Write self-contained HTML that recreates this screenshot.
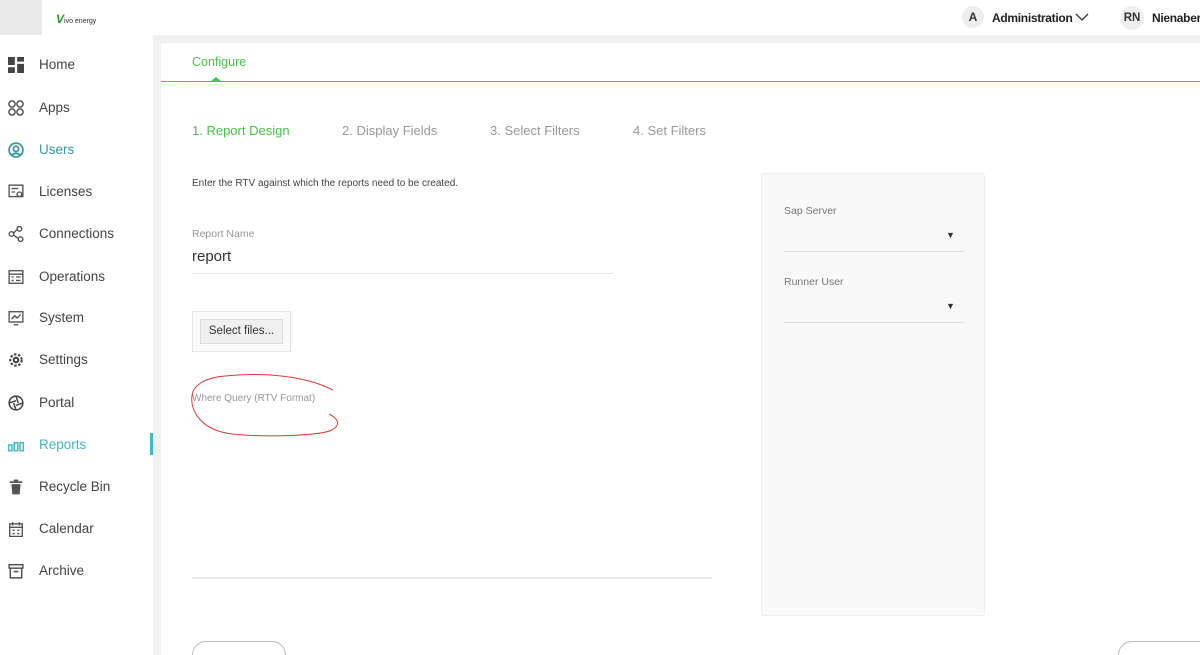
<!DOCTYPE html><html style="overflow:hidden;height:655px"><head><style>
*{margin:0;padding:0;box-sizing:border-box}
body{width:1200px;height:655px;overflow:hidden;background:#f1f1f1;font-family:"Liberation Sans",sans-serif;position:relative;color:#333}
.a{position:absolute;white-space:nowrap}
.nav{font-size:13.5px;color:#444;left:39px}
.ic{left:8px;width:16px;height:16px}
</style></head><body>
<div class="a" style="left:0;top:0;width:1200px;height:35px;background:#fff"></div>
<div class="a" style="left:0;top:0;width:42px;height:35px;background:#e9e9e9"></div>
<div class="a" style="left:56px;top:12px;font-size:7px;color:#333"><span style="color:#2a9a2a;font-size:12px;font-style:italic;font-weight:bold">V</span>ivo energy</div>
<div class="a" style="left:962px;top:6px;width:22px;height:22px;border-radius:50%;background:#eee;font-size:12px;font-weight:bold;text-align:center;line-height:22px">A</div>
<div class="a" style="left:992px;top:11px;font-size:12px;font-weight:bold;color:#222;letter-spacing:-0.3px">Administration</div>
<svg class="a" style="left:1075px;top:13px" width="14" height="9"><path d="M1 1l6 6 6-6" fill="none" stroke="#333" stroke-width="1.3"/></svg>
<div class="a" style="left:1120px;top:6px;width:24px;height:24px;border-radius:50%;background:#eee;font-size:11.5px;font-weight:bold;text-align:center;line-height:24px">RN</div>
<div class="a" style="left:1152px;top:11px;font-size:12px;font-weight:bold;color:#222;letter-spacing:-0.3px">Nienaber,</div>
<div class="a" style="left:0;top:35px;width:153px;height:620px;background:#fff"></div>
<div class="a" style="left:150px;top:433px;width:3px;height:22px;background:#3fb8c4"></div>
<svg class="a ic" style="top:57px" viewBox="0 0 14 14"><rect x="0" y="0" width="6" height="7" fill="#444"/><rect x="8" y="0" width="6" height="4" fill="#444"/><rect x="0" y="9" width="6" height="5" fill="#444"/><rect x="8" y="6" width="6" height="8" fill="#444"/></svg>
<div class="a nav" style="top:57px">Home</div>
<svg class="a ic" style="top:100px" viewBox="0 0 14 14"><g fill="none" stroke="#555" stroke-width="1.3"><circle cx="3.5" cy="3.5" r="2.7"/><circle cx="10.5" cy="3.5" r="2.7"/><circle cx="3.5" cy="10.5" r="2.7"/><circle cx="10.5" cy="10.5" r="2.7"/></g></svg>
<div class="a nav" style="top:100px">Apps</div>
<svg class="a ic" style="top:142px" viewBox="0 0 14 14"><g fill="none" stroke="#3a9a9a" stroke-width="1.6"><circle cx="7" cy="7" r="6"/><circle cx="7" cy="6" r="2.3"/><path d="M3.5 11.5c1-2 6-2 7 0"/></g></svg>
<div class="a nav" style="top:142px;color:#3a9a9a">Users</div>
<svg class="a ic" style="top:184px" viewBox="0 0 14 14"><g fill="none" stroke="#555" stroke-width="1.2"><rect x="1" y="1" width="12" height="10"/><path d="M3 4h6M3 7h3"/><circle cx="10" cy="9" r="2"/></g></svg>
<div class="a nav" style="top:184px">Licenses</div>
<svg class="a ic" style="top:226px" viewBox="0 0 14 14"><g fill="none" stroke="#555" stroke-width="1.2"><circle cx="3" cy="7" r="2"/><circle cx="10" cy="2.5" r="2"/><circle cx="11" cy="11.5" r="2"/><path d="M5 6l3-3M5 8l4 3"/></g></svg>
<div class="a nav" style="top:226px">Connections</div>
<svg class="a ic" style="top:269px" viewBox="0 0 14 14"><g fill="none" stroke="#555" stroke-width="1.2"><rect x="1" y="1.5" width="12" height="11"/><path d="M1 4.5h12M3 7h2M7 7h4M3 10h2M7 10h4"/></g></svg>
<div class="a nav" style="top:269px">Operations</div>
<svg class="a ic" style="top:310px" viewBox="0 0 14 14"><g fill="none" stroke="#555" stroke-width="1.2"><rect x="1" y="1.5" width="12" height="9"/><path d="M3 8l3-3 2 2 3-3M5 13h4"/></g></svg>
<div class="a nav" style="top:310px">System</div>
<svg class="a ic" style="top:352px" viewBox="0 0 14 14"><g fill="none" stroke="#444" stroke-width="1.8"><circle cx="7" cy="7" r="2"/><circle cx="7" cy="7" r="5" stroke-dasharray="2.2 1.4"/></g></svg>
<div class="a nav" style="top:352px">Settings</div>
<svg class="a ic" style="top:395px" viewBox="0 0 14 14"><g fill="none" stroke="#444" stroke-width="1.3"><circle cx="7" cy="7" r="6"/><path d="M7 1l2 6M13 7l-6 2M7 13l-2-6M1 7l6-2"/></g></svg>
<div class="a nav" style="top:395px">Portal</div>
<svg class="a ic" style="top:437px" viewBox="0 0 14 14"><g fill="none" stroke="#3fb8c4" stroke-width="1.3"><rect x="0.5" y="7" width="3" height="5"/><rect x="5.5" y="5" width="3" height="7"/><rect x="10.5" y="5" width="3" height="7"/></g></svg>
<div class="a nav" style="top:437px;color:#3fb8c4">Reports</div>
<svg class="a ic" style="top:479px" viewBox="0 0 14 14"><g fill="#555"><rect x="1.5" y="2" width="11" height="1.5"/><rect x="5" y="0.5" width="4" height="1.5"/><path d="M3 4.5h8l-.8 9H3.8z"/></g></svg>
<div class="a nav" style="top:479px">Recycle Bin</div>
<svg class="a ic" style="top:521px" viewBox="0 0 14 14"><g fill="none" stroke="#555" stroke-width="1.2"><rect x="1.5" y="2.5" width="11" height="11"/><path d="M1.5 5.5h11M4 1v3M10 1v3M4 8h2M8 8h2M4 11h2M8 11h2"/></g></svg>
<div class="a nav" style="top:521px">Calendar</div>
<svg class="a ic" style="top:563px" viewBox="0 0 14 14"><g fill="none" stroke="#555" stroke-width="1.3"><rect x="1" y="1.5" width="12" height="3"/><path d="M2 4.5v8.5h10V4.5M5 7.5h4"/></g></svg>
<div class="a nav" style="top:563px">Archive</div>
<div class="a" style="left:161px;top:43px;width:1039px;height:612px;background:#fff;overflow:hidden">
<div class="a" style="left:31px;top:12px;font-size:12.5px;color:#4ac24a">Configure</div>
<div class="a" style="left:0;top:38px;width:1039px;height:1px;background:#44c944"></div>
<div class="a" style="left:50px;top:34px;width:0;height:0;border-left:5px solid transparent;border-right:5px solid transparent;border-bottom:4px solid #44c944"></div>
<div class="a" style="left:31px;top:80px;font-size:13px;color:#4ac24a">1. Report Design</div>
<div class="a" style="left:181px;top:80px;font-size:13px;color:#999">2. Display Fields</div>
<div class="a" style="left:329px;top:80px;font-size:13px;color:#999">3. Select Filters</div>
<div class="a" style="left:472px;top:80px;font-size:13px;color:#999">4. Set Filters</div>
<div class="a" style="left:31px;top:135px;font-size:10px;color:#444">Enter the RTV against which the reports need to be created.</div>
<div class="a" style="left:31px;top:185px;font-size:10.5px;color:#999">Report Name</div>
<div class="a" style="left:31px;top:205px;font-size:15px;color:#333">report</div>
<div class="a" style="left:31px;top:230px;width:421px;height:1px;background:#e2e2e2"></div>
<div class="a" style="left:31px;top:268px;width:99px;height:41px;border:1px solid #e6e6e6;background:#fafafa"></div>
<div class="a" style="left:39px;top:276px;width:83px;height:25px;border:1px solid #ddd;background:#f0f0f0;font-size:11.5px;color:#333;text-align:center;line-height:23px">Select files...</div>
<div class="a" style="left:31px;top:350px;font-size:10px;color:#999">Where Query (RTV Format)</div>
<svg class="a" style="left:24px;top:327px" width="165" height="70"><path d="M148 20C120 6 80 2 40 6 18 8 8 16 7 26c-2 14 8 34 40 38 40 4 90 1 100-4 10-6 5-12-3-16" fill="none" stroke="#e03a3a" stroke-width="1"/></svg>
<div class="a" style="left:31px;top:534px;width:520px;height:2px;background:#e8e8e8"></div>
<div class="a" style="left:600px;top:130px;width:224px;height:443px;background:#f9f9f9;border:1px solid #eee;border-radius:3px"></div>
<div class="a" style="left:623px;top:162px;font-size:10.5px;color:#777">Sap Server</div>
<div class="a" style="left:623px;top:208px;width:180px;height:1px;background:#ddd"></div>
<div class="a" style="left:785px;top:187px;font-size:9px;color:#333">▼</div>
<div class="a" style="left:623px;top:233px;font-size:10.5px;color:#777">Runner User</div>
<div class="a" style="left:623px;top:279px;width:180px;height:1px;background:#ddd"></div>
<div class="a" style="left:785px;top:258px;font-size:9px;color:#333">▼</div>
<div class="a" style="left:31px;top:598px;width:94px;height:30px;border:1px solid #bbb;border-radius:14px;background:#fff"></div>
<div class="a" style="left:957px;top:598px;width:94px;height:30px;border:1px solid #bbb;border-radius:14px;background:#fff"></div>
</div>
</body></html>
